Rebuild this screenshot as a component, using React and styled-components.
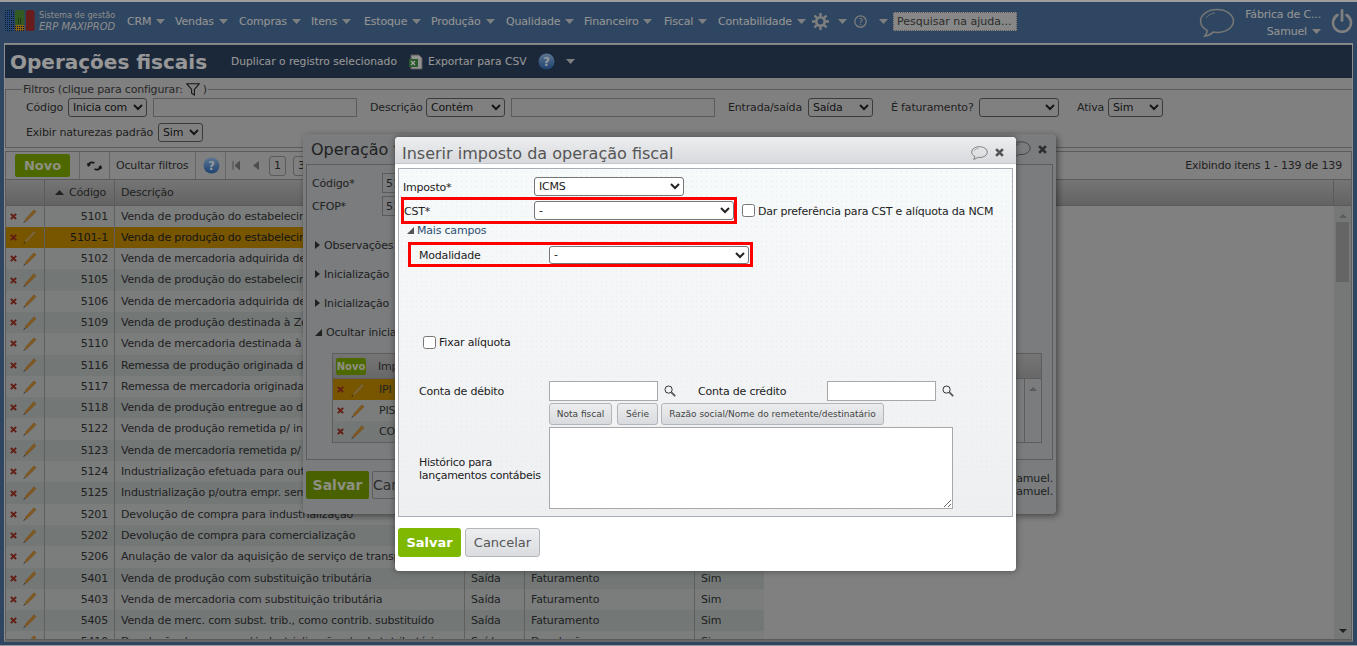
import React from "react";
import styled, { createGlobalStyle } from "styled-components";

const FONT = `"DejaVu Sans", Verdana, sans-serif`;

const GlobalStyle = createGlobalStyle`
  html, body {
    margin: 0;
    padding: 0;
    height: 646px;
    overflow: hidden;
    background: #486c95;
    font-family: ${FONT};
    font-size: 11px;
    letter-spacing: -0.17px;
    color: #333;
  }
  * { box-sizing: border-box; }
`;

const rows = [
  ["5101", "Venda de produção do estabelecimento", "Saída", "Faturamento"],
  ["5101-1", "Venda de produção do estabelecimento", "Saída", "Faturamento"],
  ["5102", "Venda de mercadoria adquirida de terceiros", "Saída", "Faturamento"],
  ["5105", "Venda de produção do estabelecimento", "Saída", "Faturamento"],
  ["5106", "Venda de mercadoria adquirida de terceiros", "Saída", "Faturamento"],
  ["5109", "Venda de produção destinada à Zona Franca", "Saída", "Faturamento"],
  ["5110", "Venda de mercadoria destinada à Zona Franca", "Saída", "Faturamento"],
  ["5116", "Remessa de produção originada de encomenda", "Saída", "Faturamento"],
  ["5117", "Remessa de mercadoria originada de encomenda", "Saída", "Faturamento"],
  ["5118", "Venda de produção entregue ao destinatário", "Saída", "Faturamento"],
  ["5122", "Venda de produção remetida p/ industrialização", "Saída", "Faturamento"],
  ["5123", "Venda de mercadoria remetida p/ industrialização", "Saída", "Faturamento"],
  ["5124", "Industrialização efetuada para outra empresa", "Saída", "Faturamento"],
  ["5125", "Industrialização p/outra empr. sem retorno", "Saída", "Faturamento"],
  ["5201", "Devolução de compra para industrialização", "Saída", "Faturamento"],
  ["5202", "Devolução de compra para comercialização", "Saída", "Faturamento"],
  ["5206", "Anulação de valor da aquisição de serviço de transporte", "Saída", "Faturamento"],
  ["5401", "Venda de produção com substituição tributária", "Saída", "Faturamento"],
  ["5403", "Venda de mercadoria com substituição tributária", "Saída", "Faturamento"],
  ["5405", "Venda de merc. com subst. trib., como contrib. substituído", "Saída", "Faturamento"],
  ["5410", "Devolução de compra p/ industrialização c/ subst. tributária", "Saída", "Devolução"],
];

const navItems = [
  ["CRM", 48],
  ["Vendas", 64],
  ["Compras", 72],
  ["Itens", 53],
  ["Estoque", 67],
  ["Produção", 75],
  ["Qualidade", 78],
  ["Financeiro", 80],
  ["Fiscal", 54],
  ["Contabilidade", 94],
];

const Caret = ({ color = "#c4c4c4", size = 9 }) => (
  <svg width={size} height={5} viewBox="0 0 9 5" style={{ flex: "none" }}>
    <path d="M0 0h9L4.5 5z" fill={color} />
  </svg>
);

const Cross = ({ color = "#983020", size = 7 }) => (
  <svg width={size} height={size} viewBox="0 0 8 8" style={{ flex: "none" }}>
    <path d="M1 1l6 6M7 1L1 7" stroke={color} strokeWidth="2.4" />
  </svg>
);

const Pencil = ({ faded }) => (
  <svg width="14" height="14" viewBox="0 0 14 14" style={{ flex: "none" }}>
    <path d="M11 0.8l2 2L4.2 11.6 2 12.4l0.6-2.4z" fill={faded ? "#c09c54" : "#c88a34"} stroke={faded ? "#a07c30" : "#a86c1c"} strokeWidth="0.5" />
    <path d="M2 12.4L0.6 13.6" stroke="#333" strokeWidth="1" />
  </svg>
);

const Bubble = ({ size = 36, color = "#b5b5b5", sw = 1.5 }) => (
  <svg width={size} height={size * 0.83} viewBox="0 0 36 30" style={{ flex: "none" }}>
    <path d="M18 1.5C9 1.5 1.5 6.5 1.5 13c0 4 2.7 7.4 6.8 9.5-.2 2.2-1.3 4.2-2.8 5.8 3.4-.4 6.5-2 8.6-4.1 1.3.2 2.6.3 3.9.3 9 0 16.5-5 16.5-11.5S27 1.5 18 1.5z" fill="none" stroke={color} strokeWidth={sw} />
    <path d="M7 10c2-3 5-4.5 9-5" fill="none" stroke={color} strokeWidth={sw * 0.6} />
  </svg>
);

const Magnifier = () => (
  <svg width="12" height="12" viewBox="0 0 12 12" style={{ flex: "none" }}>
    <circle cx="4.6" cy="4.6" r="3.6" fill="none" stroke="#333" strokeWidth="1" />
    <path d="M7.4 7.4L11.2 11.2" stroke="#555" strokeWidth="1.8" />
  </svg>
);

const HelpDot = () => (
  <svg width="17" height="17" viewBox="0 0 17 17" style={{ flex: "none" }}>
    <defs>
      <linearGradient id="helpFill" x1="0" y1="0" x2="0" y2="1">
        <stop offset="0" stopColor="#8fb4e0" />
        <stop offset="1" stopColor="#2f66ad" />
      </linearGradient>
    </defs>
    <circle cx="8.5" cy="8.5" r="8" fill="url(#helpFill)" />
    <text x="8.5" y="12.6" textAnchor="middle" fontSize="11.5" fontWeight="700" fontFamily="DejaVu Sans" fill="#e4ecf6">?</text>
  </svg>
);

const Page = styled.div`
  position: relative;
  width: 1357px;
  height: 646px;
  overflow: hidden;
  display: flex;
  flex-direction: column;
  background: #486c95;
`;

const TopBar = styled.header`
  height: 43px;
  flex: none;
  display: flex;
  align-items: center;
  padding: 0 4px 3px 5px;
  border-top: 2px solid #f2f2f2;
  color: #e4e4e4;
`;

const Brand = styled.div`
  margin-left: 4px;
  width: 88px;
  line-height: 12px;
  font-size: 8.2px;
  letter-spacing: 0;
  color: #d8d8d8;
  b {
    display: block;
    font-size: 10px;
    font-weight: 400;
    font-style: italic;
  }
`;

const Nav = styled.nav`
  display: flex;
  align-items: center;
  font-size: 11px;
`;

const NavItem = styled.a`
  display: flex;
  align-items: center;
  gap: 5px;
  width: ${(p) => p.$w}px;
`;

const IconMenu = styled.div`
  display: flex;
  align-items: center;
  margin-right: 5px;
  svg:nth-child(2) { margin-left: 9px; }
  svg:nth-child(3) { margin-left: 7px; }
  svg:nth-child(4) { margin-left: 12px; }
`;

const HelpSearch = styled.div`
  width: 124px;
  height: 19px;
  padding: 0 3px;
  line-height: 18px;
  background: #d0d0d0;
  border: 1px dotted #8a8a8a;
  color: #444;
  font-size: 11px;
  letter-spacing: 0;
  white-space: nowrap;
`;

const Account = styled.div`
  margin-left: auto;
  display: flex;
  align-items: center;
  gap: 10px;
  > svg:first-child { margin-top: 3px; }
`;

const AccountText = styled.div`
  padding-top: 3px;
  text-align: right;
  font-size: 11px;
  line-height: 17px;
  span {
    display: flex;
    justify-content: flex-end;
    align-items: center;
    gap: 5px;
  }
`;

const Panel = styled.main`
  flex: none;
  height: 599px;
  margin-left: 4px;
  width: 1349px;
  border: 1px solid #d8d8d8;
  border-bottom: 2px solid #a0a0a0;
  background: #c5c5c5;
  display: flex;
  flex-direction: column;
  overflow: hidden;
`;

const BottomEdge = styled.div`
  flex: none;
  height: 1px;
  margin-top: auto;
  background: #e8eef4;
`;

const TitleBar = styled.div`
  flex: none;
  height: 33px;
  margin-top: 1px;
  display: flex;
  align-items: center;
  padding-left: 5px;
  background: #2a3e58;
  color: #e8e8e8;
`;

const PageTitle = styled.h1`
  margin: 0;
  font-size: 20px;
  font-weight: 700;
  letter-spacing: 0;
  width: 221px;
`;

const TitleAction = styled.span`
  display: flex;
  align-items: center;
  gap: 4px;
  margin-right: 11px;
  font-size: 10.7px;
  letter-spacing: 0;
`;

const Filters = styled.fieldset`
  flex: none;
  margin: 5px 0 0;
  height: 65px;
  padding: 0 0 0 20px;
  border: 1px solid #8c8c8c;
  border-right: 0;
  legend {
    padding: 0 1px;
    margin-left: -4px;
    display: flex;
    align-items: center;
    gap: 3px;
    height: 13px;
    line-height: 12px;
    color: #3d3d3d;
  }
`;

const FilterRow = styled.div`
  display: flex;
  align-items: center;
  height: 19px;
  margin-top: ${(p) => p.$top || 0}px;
`;

const FieldLabel = styled.label`
  white-space: nowrap;
  width: ${(p) => p.$w}px;
  flex: none;
`;

const FormLabel = styled(FieldLabel)`
  letter-spacing: -0.2px;
  padding-top: 1px;
  padding-left: ${(p) => p.$pl || 0}px;
`;

const Select = styled.select`
  flex: none;
  width: ${(p) => p.$w}px;
  height: ${(p) => p.$h || 19}px;
  padding: 0;
  font-family: ${FONT};
  font-size: 11px;
  letter-spacing: -0.2px;
  color: #222;
  background: ${(p) => (p.$white ? "#fff" : "transparent")};
  border: 1px solid ${(p) => (p.$white ? "#767676" : "#5c5c5c")};
  border-radius: 3px;
  margin-right: ${(p) => p.$mr || 0}px;
`;

const TextInput = styled.input`
  flex: none;
  width: ${(p) => p.$w}px;
  height: ${(p) => p.$h || 19}px;
  background: ${(p) => (p.$white ? "#fff" : "transparent")};
  border: 1px solid ${(p) => (p.$white ? "#a8a8a8" : "#8c8c8c")};
  margin-right: ${(p) => p.$mr || 0}px;
  padding: 0 3px;
  font-family: ${FONT};
  font-size: 11px;
  color: #333;
`;

const Grid = styled.section`
  flex: 1;
  min-height: 0;
  margin-top: 3px;
  border: 1px solid #8c8c8c;
  border-right: 1px solid #929292;
  display: flex;
  flex-direction: column;
`;

const Toolbar = styled.div`
  flex: none;
  height: 28px;
  display: flex;
  align-items: center;
  padding-right: 9px;
  border-bottom: 1px solid #8c8c8c;
`;

const NewButton = styled.button`
  height: 23px;
  width: 55px;
  margin-left: 9px;
  padding: 0;
  border: 0;
  border-radius: 2px;
  background: #78a000;
  color: #d8dcc8;
  font-family: ${FONT};
  font-size: 13px;
  font-weight: 700;
`;

const ToolSep = styled.span`
  flex: none;
  height: 27px;
  width: 1px;
  background: #9c9c9c;
  margin: ${(p) => p.$m || "0 7px"};
`;

const ToolText = styled.span`
  flex: none;
  width: 73px;
  white-space: nowrap;
`;

const PageBox = styled.span`
  display: flex;
  align-items: center;
  justify-content: center;
  flex: none;
  width: 17px;
  height: 20px;
  margin-left: ${(p) => p.$ml}px;
  border: 1px solid #8c8c8c;
  border-radius: 3px;
  font-size: 11px;
`;

const PagerArrow = styled.span`
  display: flex;
  align-items: center;
  margin-left: ${(p) => p.$ml}px;
  color: #777;
`;

const ItemsCount = styled.span`
  margin-left: auto;
`;

const HeadRow = styled.div`
  flex: none;
  height: 25.5px;
  display: grid;
  grid-template-columns: 39px 70px 350px 1fr;
  background: linear-gradient(#b4b4b4, #989898);
  border-bottom: 1px solid #8c8c8c;
  padding-right: 17px;
  span {
    display: flex;
    align-items: center;
    gap: 5px;
    padding-left: 6px;
    border-right: 1px solid #8c8c8c;
  }
  span:nth-child(2) { padding-left: 10px; }
`;

const GridBody = styled.div`
  flex: 1;
  min-height: 0;
  display: flex;
`;

const Rows = styled.div`
  flex: 1;
  overflow: hidden;
`;

const Row = styled.div`
  width: 758px;
  height: 21.3px;
  display: grid;
  grid-template-columns: 39px 70px 350px 60px 170px 69px;
  align-items: stretch;
  line-height: 21.3px;
  background: ${(p) => (p.$selected ? "#b88400" : p.$alt ? "#b1b7b6" : "#bdc0c0")};
  color: ${(p) => (p.$selected ? "#222" : "#333")};
`;

const Cell = styled.div`
  padding: 0 6px;
  overflow: hidden;
  white-space: nowrap;
  border-right: 1px solid #929292;
  text-align: ${(p) => (p.$right ? "right" : "left")};
  &:last-child { border-right: 0; }
`;

const ActionCell = styled(Cell)`
  display: flex;
  align-items: center;
  gap: 6px;
  padding: 0 0 0 4px;
`;

const Scrollbar = styled.div`
  flex: none;
  width: 17px;
  display: flex;
  flex-direction: column;
  align-items: center;
  background: #b5b8b7;
  padding-top: 4px;
`;

const Thumb = styled.div`
  width: 13px;
  height: 60px;
  margin-top: 4px;
  background: #9c9c9c;
`;

const ScrollArrow = styled.span`
  flex: none;
  width: 0;
  height: 0;
  border: 4px solid transparent;
  ${(p) => (p.$down
    ? "border-top: 4px solid #333; margin-top: auto; margin-bottom: 2px;"
    : "border-bottom: 4px solid #8a8a8a;")}
`;

const Modal = styled.div`
  position: absolute;
  left: ${(p) => p.$x}px;
  top: ${(p) => p.$y}px;
  width: ${(p) => p.$w}px;
  height: ${(p) => p.$h}px;
  border-radius: 4px;
  overflow: hidden;
  display: flex;
  flex-direction: column;
`;

const OuterModal = styled(Modal)`
  overflow: visible;
  background: #bcbfc2;
  box-shadow: 2px 2px 6px rgba(0, 0, 0, 0.45);
  padding: 0 3px;
`;

const OuterTitle = styled.div`
  flex: none;
  height: 30px;
  display: flex;
  align-items: center;
  justify-content: space-between;
  padding: 0 6px 0 5px;
  font-size: 16px;
  letter-spacing: 0;
`;

const OuterBody = styled.div`
  flex: none;
  height: 296px;
  border: 1px solid #8f8f8f;
  padding: 8px 10px 0 5px;
`;

const OuterField = styled.div`
  display: flex;
  align-items: center;
  height: 20px;
  margin-bottom: 3px;
  label { width: 70px; }
`;

const Disclosure = styled.div`
  display: flex;
  align-items: center;
  gap: 4px;
  height: 14px;
  padding-left: 3px;
  margin-top: ${(p) => p.$top}px;
  white-space: nowrap;
`;

const RightArrow = styled.span`
  width: 0;
  height: 0;
  border: 4px solid transparent;
  border-left: 5px solid #333;
  border-right: 0;
`;

const OpenArrow = styled.span`
  flex: none;
  width: 0;
  height: 0;
  border-style: solid;
  border-width: 0 0 7px 7px;
  border-color: transparent transparent ${(p) => p.$color || "#333"} transparent;
`;

const InnerTable = styled.div`
  margin: 14px 0 0 20px;
  border: 1px solid #8f8f8f;
  height: 90px;
  position: relative;
`;

const InnerHead = styled.div`
  height: 25px;
  display: flex;
  align-items: center;
  background: linear-gradient(#b4b4b4, #a0a0a0);
  border-bottom: 1px solid #8f8f8f;
`;

const InnerNew = styled(NewButton)`
  width: 30px;
  height: 17px;
  margin-left: 3px;
  font-size: 10px;
  margin-right: 12px;
`;

const InnerRow = styled.div`
  height: 21px;
  display: flex;
  align-items: center;
  gap: 7px;
  padding-left: 4px;
  width: 500px;
  background: ${(p) => (p.$selected ? "#b88400" : p.$alt ? "#b1b7b6" : "#bdc0c0")};
  span { margin-left: 7px; }
`;

const InnerScroll = styled.div`
  position: absolute;
  right: 0;
  top: 25px;
  bottom: 0;
  width: 17px;
  display: flex;
  justify-content: center;
  padding-top: 4px;
  border-left: 1px solid #8f8f8f;
  background: #bcbfc2;
`;

const OuterFooter = styled.div`
  display: flex;
  align-items: flex-start;
  margin-top: 11px;
  gap: 3px;
`;

const OuterSave = styled.button`
  width: 63px;
  height: 28px;
  border: 0;
  border-radius: 2px;
  padding: 0;
  background: #709600;
  color: #d8dcc8;
  font-family: ${FONT};
  font-size: 14px;
  font-weight: 700;
`;

const OuterCancel = styled.button`
  width: 60px;
  height: 28px;
  border: 1px solid #8f8f8f;
  border-radius: 2px;
  background: #bcbfc2;
  font-family: ${FONT};
  font-size: 14px;
  color: #444;
  padding: 0;
`;

const OuterAudit = styled.div`
  margin-left: auto;
  text-align: right;
  line-height: 13px;
  padding-top: 1px;
  white-space: nowrap;
`;

const Dim = styled.div`
  position: absolute;
  inset: 0;
  background: rgba(0, 0, 0, 0.35);
`;

const FrontModal = styled(Modal)`
  background: #fff;
  box-shadow: 0 0 6px rgba(50, 50, 50, 0.7);
  padding: 0 3px;
`;

const FrontTitle = styled.div`
  flex: none;
  height: 27px;
  margin: 0 -3px;
  padding: 6px 12px 0 7px;
  display: flex;
  align-items: center;
  justify-content: space-between;
  background: linear-gradient(#eceef0, #d7d9dc);
  border-bottom: 1px solid #c4c7cc;
  font-size: 16px;
  letter-spacing: 0;
  color: #555;
`;

const TitleIcons = styled.div`
  display: flex;
  align-items: center;
  gap: 7px;
`;

const FormBox = styled.div`
  flex: none;
  margin-top: 4px;
  height: 349px;
  border: 1px solid #a9aeb6;
  color: #222;
  background-color: #f1f3f4;
  background-image: radial-gradient(#e8eaec 0.6px, transparent 0.8px), linear-gradient(#f7fafa, #eeeff1);
  background-size: 5px 5px, 100% 100%;
`;

const FormRow = styled.div`
  display: flex;
  align-items: center;
  margin: ${(p) => p.$m || "0"};
`;

const RedBox = styled.div`
  display: flex;
  align-items: center;
  flex: none;
  border: 3px solid #f00;
  width: ${(p) => p.$w}px;
  height: ${(p) => p.$h}px;
`;

const CheckBox = styled.input.attrs({ type: "checkbox" })`
  flex: none;
  width: 13px;
  height: 13px;
  margin: 0 3px 0 ${(p) => p.$ml || 0}px;
`;

const MoreFields = styled.div`
  display: flex;
  align-items: center;
  gap: 3px;
  height: 12px;
  margin-left: 8px;
  letter-spacing: -0.2px;
  color: #2c4f73;
`;

const TagButton = styled.button`
  flex: none;
  width: ${(p) => p.$w}px;
  height: 22px;
  padding: 0;
  border: 1px solid #b2b5b9;
  border-radius: 3px;
  background: linear-gradient(#ecedef, #d8dadd);
  font-family: ${FONT};
  font-size: 9px;
  white-space: nowrap;
  color: #444;
  margin-right: ${(p) => p.$mr || 0}px;
`;

const Notes = styled.textarea`
  flex: none;
  width: 404px;
  height: 82px;
  background: #fff;
  border: 1px solid #a8a8a8;
  padding: 0;
  margin: 0;
`;

const NotesLabel = styled(FormLabel)`
  width: 130px;
  line-height: 13px;
  letter-spacing: -0.28px;
`;

const Footer = styled.div`
  flex: none;
  margin-top: 11px;
  display: flex;
  gap: 4px;
`;

const SaveButton = styled.button`
  width: 63px;
  height: 29px;
  padding: 0;
  border: 0;
  border-radius: 3px;
  background: #7fb800;
  color: #fff;
  font-family: ${FONT};
  font-size: 13px;
  font-weight: 700;
`;

const CancelButton = styled.button`
  width: 75px;
  height: 29px;
  padding: 0;
  border: 1px solid #b2b5b9;
  border-radius: 3px;
  background: linear-gradient(#eceef0, #dadcdf);
  color: #555;
  font-family: ${FONT};
  font-size: 13px;
`;

const Logo = () => (
  <svg width="30" height="22" viewBox="0 0 30 22" style={{ flex: "none" }}>
    <defs>
      <pattern id="logoDots" width="2" height="2" patternUnits="userSpaceOnUse">
        <rect width="1" height="1" fill="#10243c" />
      </pattern>
    </defs>
    <rect x="0" y="0" width="9" height="21" rx="2" fill="#3d6fb5" />
    <rect x="0" y="0" width="9" height="21" rx="2" fill="url(#logoDots)" />
    <rect x="10" y="0" width="9.5" height="15" rx="2" fill="#4f8a34" />
    <rect x="10" y="15" width="9.5" height="6" rx="1" fill="#d89a20" />
    <rect x="10" y="15" width="9.5" height="6" rx="1" fill="url(#logoDots)" />
    <rect x="21" y="0" width="8.5" height="21" rx="2" fill="#a02c2c" />
    <path d="M13 9h4M13 11h4M13 13h4" stroke="#222" strokeWidth="1" strokeDasharray="1 1" />
  </svg>
);

const Gear = () => (
  <svg width="17" height="17" viewBox="0 0 17 17" style={{ flex: "none" }}>
    <circle cx="8.5" cy="8.5" r="4.2" fill="none" stroke="#c4c4c4" strokeWidth="2.6" />
    <path d="M8.5 0v3.2M8.5 13.8V17M0 8.5h3.2M13.8 8.5H17M2.5 2.5l2.3 2.3M12.2 12.2l2.3 2.3M14.5 2.5l-2.3 2.3M4.8 12.2l-2.3 2.3" stroke="#c4c4c4" strokeWidth="2.4" />
  </svg>
);

const HelpRing = () => (
  <svg width="13" height="13" viewBox="0 0 13 13" style={{ flex: "none" }}>
    <circle cx="6.5" cy="6.5" r="5.7" fill="none" stroke="#c4c4c4" strokeWidth="1.2" />
    <text x="6.5" y="10" textAnchor="middle" fontSize="9" fontFamily="DejaVu Sans" fill="#c4c4c4">?</text>
  </svg>
);

const Power = () => (
  <svg width="22" height="24" viewBox="0 0 22 24" style={{ flex: "none" }}>
    <path d="M6.5 6a9 9 0 1 0 9 0" fill="none" stroke="#c4c4c4" strokeWidth="2.6" strokeLinecap="round" />
    <path d="M11 1.5v10" stroke="#c4c4c4" strokeWidth="2.8" strokeLinecap="round" />
  </svg>
);

const Funnel = () => (
  <svg width="14" height="13" viewBox="0 0 14 13" style={{ flex: "none" }}>
    <path d="M0.7 0.7h12.6L8.4 6.4v5.6L5.6 10.2V6.4z" fill="none" stroke="#222" strokeWidth="1.1" />
  </svg>
);

const Refresh = () => (
  <svg width="15" height="12" viewBox="0 0 15 12" style={{ flex: "none" }}>
    <path d="M1 5.5C1.8 2.8 5 1.6 7.4 3M14 6.5C13.2 9.2 10 10.4 7.6 9" fill="none" stroke="#222" strokeWidth="1.8" />
    <path d="M0 3l1 4 3-2.2zM15 9l-1-4-3 2.2z" fill="#222" />
  </svg>
);

const Sheet = () => (
  <svg width="16" height="16" viewBox="0 0 16 16" style={{ flex: "none" }}>
    <path d="M3 1h8l3 3v11H3z" fill="#e0e0e0" stroke="#8a8a8a" />
    <rect x="1" y="5" width="9" height="8" fill="#3f8a3f" />
    <path d="M3 7l4 4M7 7l-4 4" stroke="#fff" strokeWidth="1.2" />
  </svg>
);

const FilterBar = () => (
  <Filters>
    <legend>Filtros (clique para configurar: <Funnel /> )</legend>
    <FilterRow $top={2}>
      <FieldLabel $w={42}>Código</FieldLabel>
      <Select $w={79} $mr={6}><option>Inicia com</option></Select>
      <TextInput $w={204} $mr={13} />
      <FieldLabel $w={56}>Descrição</FieldLabel>
      <Select $w={79} $mr={6}><option>Contém</option></Select>
      <TextInput $w={204} $mr={13} />
      <FieldLabel $w={80}>Entrada/saída</FieldLabel>
      <Select $w={65} $mr={18}><option>Saída</option></Select>
      <FieldLabel $w={88}>É faturamento?</FieldLabel>
      <Select $w={80} $mr={18}><option></option></Select>
      <FieldLabel $w={31}>Ativa</FieldLabel>
      <Select $w={55}><option>Sim</option></Select>
    </FilterRow>
    <FilterRow $top={6}>
      <FieldLabel $w={132}>Exibir naturezas padrão</FieldLabel>
      <Select $w={45}><option>Sim</option></Select>
    </FilterRow>
  </Filters>
);

const DataGrid = () => (
  <Grid>
    <Toolbar>
      <NewButton>Novo</NewButton>
      <ToolSep $m="0 7px 0 9px" />
      <Refresh />
      <ToolSep $m="0 6px 0 7px" />
      <ToolText>Ocultar filtros</ToolText>
      <ToolSep $m="0 7px 0 6px" />
      <HelpDot />
      <ToolSep $m="0 6px 0 5px" />
      <PagerArrow $ml={0}>
        <svg width="8" height="9" viewBox="0 0 8 9"><path d="M1 0v9M8 0v9L3 4.5z" stroke="#777" fill="#777" /></svg>
      </PagerArrow>
      <PagerArrow $ml={13}>
        <svg width="6" height="9" viewBox="0 0 6 9"><path d="M6 0v9L0 4.5z" fill="#777" /></svg>
      </PagerArrow>
      <PageBox $ml={10}>1</PageBox>
      <PageBox $ml={7}>3</PageBox>
      <ItemsCount>Exibindo itens 1 - 139 de 139</ItemsCount>
    </Toolbar>
    <HeadRow>
      <span />
      <span><svg width="9" height="5" viewBox="0 0 9 5"><path d="M0 5h9L4.5 0z" fill="#333" /></svg>Código</span>
      <span>Descrição</span>
      <span />
    </HeadRow>
    <GridBody>
      <Rows>
        {rows.map((r, i) => (
          <Row key={r[0]} $selected={i === 1} $alt={i % 2 === 1}>
            <ActionCell>
              <Cross />
              <Pencil faded={i === 1} />
            </ActionCell>
            <Cell $right>{r[0]}</Cell>
            <Cell>{r[1]}</Cell>
            <Cell>{r[2]}</Cell>
            <Cell>{r[3]}</Cell>
            <Cell>Sim</Cell>
          </Row>
        ))}
      </Rows>
      <Scrollbar>
        <ScrollArrow />
        <Thumb />
        <ScrollArrow $down />
      </Scrollbar>
    </GridBody>
  </Grid>
);

const BackDialog = () => (
  <OuterModal $x={303} $y={134} $w={753} $h={380}>
    <OuterTitle>
      <span>Operação fiscal</span>
      <TitleIcons>
        <Bubble size={20} color="#555" />
        <Cross color="#444" size={9} />
      </TitleIcons>
    </OuterTitle>
    <OuterBody>
      <OuterField>
        <label>Código*</label>
        <TextInput $w={120} $h={20} defaultValue="5101-1" />
      </OuterField>
      <OuterField>
        <label>CFOP*</label>
        <TextInput $w={120} $h={20} defaultValue="5101" />
      </OuterField>
      <Disclosure $top={22}><RightArrow />Observações</Disclosure>
      <Disclosure $top={15}><RightArrow />Inicialização</Disclosure>
      <Disclosure $top={15}><RightArrow />Inicialização</Disclosure>
      <Disclosure $top={15}><OpenArrow />Ocultar inicialização</Disclosure>
      <InnerTable>
        <InnerHead>
          <InnerNew>Novo</InnerNew>
          Imposto
        </InnerHead>
        <InnerRow $selected><Cross /><Pencil faded /><span>IPI</span></InnerRow>
        <InnerRow><Cross /><Pencil /><span>PIS</span></InnerRow>
        <InnerRow $alt><Cross /><Pencil /><span>COFINS</span></InnerRow>
        <InnerScroll><ScrollArrow /></InnerScroll>
      </InnerTable>
    </OuterBody>
    <OuterFooter>
      <OuterSave>Salvar</OuterSave>
      <OuterCancel>Cancelar</OuterCancel>
      <OuterAudit>Criado por Samuel.<br />Alterado por Samuel.</OuterAudit>
    </OuterFooter>
  </OuterModal>
);

const TaxDialog = () => (
  <FrontModal $x={395} $y={137} $w={621} $h={434}>
    <FrontTitle>
      <span>Inserir imposto da operação fiscal</span>
      <TitleIcons>
        <Bubble size={17} color="#777" sw={2} />
        <Cross color="#555" size={9} />
      </TitleIcons>
    </FrontTitle>
    <FormBox>
      <FormRow $m="8px 0 0 4px">
        <FormLabel $w={131}>Imposto*</FormLabel>
        <Select $w={150} $white><option>ICMS</option></Select>
      </FormRow>
      <FormRow $m="1px 0 0 2px">
        <RedBox $w={336} $h={27}>
          <FormLabel $w={130}>CST*</FormLabel>
          <Select $w={200} $white><option>-</option></Select>
        </RedBox>
        <CheckBox $ml={5} />
        <FormLabel $w={240}>Dar preferência para CST e alíquota da NCM</FormLabel>
      </FormRow>
      <MoreFields><OpenArrow $color="#555" />Mais campos</MoreFields>
      <FormRow $m="6px 0 0 9px">
        <RedBox $w={345} $h={25}>
          <FormLabel $w={138} $pl={8}>Modalidade</FormLabel>
          <Select $w={200} $h={18} $white><option>-</option></Select>
        </RedBox>
      </FormRow>
      <FormRow $m="68px 0 0 24px">
        <CheckBox />
        <FormLabel $w={100}>Fixar alíquota</FormLabel>
      </FormRow>
      <FormRow $m="32px 0 0 20px">
        <FormLabel $w={130}>Conta de débito</FormLabel>
        <TextInput $w={109} $h={20} $white $mr={6} />
        <Magnifier />
        <FormLabel $w={151} $pl={22}>Conta de crédito</FormLabel>
        <TextInput $w={109} $h={20} $white $mr={6} />
        <Magnifier />
      </FormRow>
      <FormRow $m="2px 0 0 150px">
        <TagButton $w={63} $mr={5}>Nota fiscal</TagButton>
        <TagButton $w={41} $mr={3}>Série</TagButton>
        <TagButton $w={223}>Razão social/Nome do remetente/destinatário</TagButton>
      </FormRow>
      <FormRow $m="2px 0 0 20px">
        <NotesLabel>Histórico para<br />lançamentos contábeis</NotesLabel>
        <Notes />
      </FormRow>
    </FormBox>
    <Footer>
      <SaveButton>Salvar</SaveButton>
      <CancelButton>Cancelar</CancelButton>
    </Footer>
  </FrontModal>
);

export default function App() {
  return (
    <>
      <GlobalStyle />
      <Page>
        <TopBar>
          <Logo />
          <Brand>Sistema de gestão<b>ERP MAXIPROD</b></Brand>
          <Nav>
            {navItems.map(([label, w]) => (
              <NavItem key={label} $w={w}>{label}<Caret /></NavItem>
            ))}
          </Nav>
          <IconMenu>
            <Gear />
            <Caret />
            <HelpRing />
            <Caret />
          </IconMenu>
          <HelpSearch>Pesquisar na ajuda...</HelpSearch>
          <Account>
            <Bubble />
            <AccountText>
              Fábrica de C...
              <span>Samuel <Caret /></span>
            </AccountText>
            <Power />
          </Account>
        </TopBar>
        <Panel>
          <TitleBar>
            <PageTitle>Operações fiscais</PageTitle>
            <TitleAction>Duplicar o registro selecionado</TitleAction>
            <TitleAction><Sheet />Exportar para CSV</TitleAction>
            <TitleAction><HelpDot /></TitleAction>
            <Caret />
          </TitleBar>
          <FilterBar />
          <DataGrid />
        </Panel>
        <BottomEdge />
        <BackDialog />
        <Dim />
        <TaxDialog />
      </Page>
    </>
  );
}
